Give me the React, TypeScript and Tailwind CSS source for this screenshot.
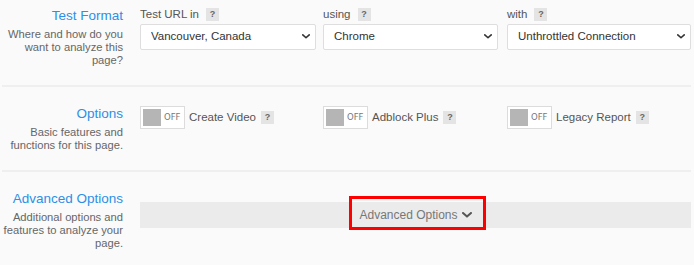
import { useState } from "react";

const font = "font-['Liberation_Sans',Arial,sans-serif]";

function Help({ className = "" }: { className?: string }) {
  return (
    <span
      className={`inline-flex h-[13px] w-[13px] items-center justify-center bg-[#e4e4e4] text-[9px] font-bold leading-none text-[#666] ${className}`}
    >
      ?
    </span>
  );
}

function Chevron({ className = "" }: { className?: string }) {
  return (
    <svg viewBox="0 0 10 6" className={className} fill="none">
      <path
        d="M1 1l4 3.6L9 1"
        stroke="currentColor"
        strokeWidth="2"
        strokeLinecap="round"
        strokeLinejoin="round"
      />
    </svg>
  );
}

function Select({
  label,
  value,
  options,
  width,
}: {
  label: string;
  value: string;
  options: string[];
  width: string;
}) {
  const [val, setVal] = useState(value);
  return (
    <div className="flex flex-col">
      <div className="flex h-[13px] items-center text-[11.5px] leading-[13px] text-[#555]">
        <span>{label}</span>
        <Help className="ml-[7px]" />
      </div>
      <div className={`relative mt-[2px] ${width}`}>
        <select
          value={val}
          onChange={(e) => setVal(e.target.value)}
          className="h-[26px] w-full appearance-none rounded-[2px] border border-[#dedede] bg-white pl-[10px] text-[11.5px] text-[#333] outline-none"
        >
          {options.map((o) => (
            <option key={o}>{o}</option>
          ))}
        </select>
        <Chevron className="pointer-events-none absolute right-[6px] top-[11px] h-[5px] w-[8px] text-[#333]" />
      </div>
    </div>
  );
}

function Toggle({ label }: { label: string }) {
  const [on, setOn] = useState(false);
  return (
    <div className="flex items-center">
      <button
        onClick={() => setOn((p) => !p)}
        className="flex h-[23px] w-[45px] items-center border border-[#dcdcdc] bg-white p-[2px]"
      >
        <span className="h-[17px] w-[18px] bg-[#b5b5b5]" />
        <span className="ml-[3px] font-['DejaVu_Sans',sans-serif] text-[8.5px] text-[#777]">
          {on ? "ON" : "OFF"}
        </span>
      </button>
      <span className="ml-[4px] text-[11.5px] text-[#555]">{label}</span>
      <Help className="ml-[5px]" />
    </div>
  );
}

function Row({
  title,
  lines,
  children,
  top,
}: {
  title: string;
  lines: string[];
  children: React.ReactNode;
  top: string;
}) {
  return (
    <div className={`flex ${top}`}>
      <div className="w-[121px] shrink-0 text-right">
        <div className="text-[13.5px] leading-[16px] text-[#2d8fe6]">{title}</div>
        <div className="mt-[4px] text-[11.2px] leading-[13px] text-[#666]">
          {lines.map((l) => (
            <div key={l}>{l}</div>
          ))}
        </div>
      </div>
      <div className="ml-[17px] flex-1">{children}</div>
    </div>
  );
}

export default function App() {
  return (
    <div className={`h-[265px] w-[694px] overflow-hidden bg-[#fafafa] pl-[2px] pr-[3px] ${font}`}>
      <div className="h-[85px]">
        <Row
          title="Test Format"
          lines={["Where and how do you", "want to analyze this", "page?"]}
          top="pt-[8px]"
        >
          <div className="grid grid-cols-[183px_184px_1fr]">
            <Select
              label="Test URL in"
              value="Vancouver, Canada"
              options={["Vancouver, Canada", "Dulles, VA", "London, UK"]}
              width="w-[176px]"
            />
            <Select
              label="using"
              value="Chrome"
              options={["Chrome", "Firefox", "Edge"]}
              width="w-[175px]"
            />
            <Select
              label="with"
              value="Unthrottled Connection"
              options={["Unthrottled Connection", "Cable", "3G"]}
              width="w-full"
            />
          </div>
        </Row>
      </div>
      <div className="h-[2px] bg-[#efefef]" />
      <div className="h-[83px]">
        <Row
          title="Options"
          lines={["Basic features and", "functions for this page."]}
          top="pt-[19px]"
        >
          <div className="grid grid-cols-[183px_184px_1fr]">
            <Toggle label="Create Video" />
            <Toggle label="Adblock Plus" />
            <Toggle label="Legacy Report" />
          </div>
        </Row>
      </div>
      <div className="h-[2px] bg-[#efefef]" />
      <Row
        title="Advanced Options"
        lines={["Additional options and", "features to analyze your", "page."]}
        top="pt-[19px]"
      >
        <div className="mt-[11px] flex h-[26px] items-center justify-center bg-[#ebebeb]">
          <button className="relative flex items-center text-[12px] text-[#777]">
            <span>Advanced Options</span>
            <Chevron className="ml-[4px] h-[6px] w-[10px] text-[#555]" />
            <span className="pointer-events-none absolute -left-[10px] -right-[14px] -top-[10px] -bottom-[6px] border-[3px] border-[#ff0000]" />
          </button>
        </div>
      </Row>
    </div>
  );
}
